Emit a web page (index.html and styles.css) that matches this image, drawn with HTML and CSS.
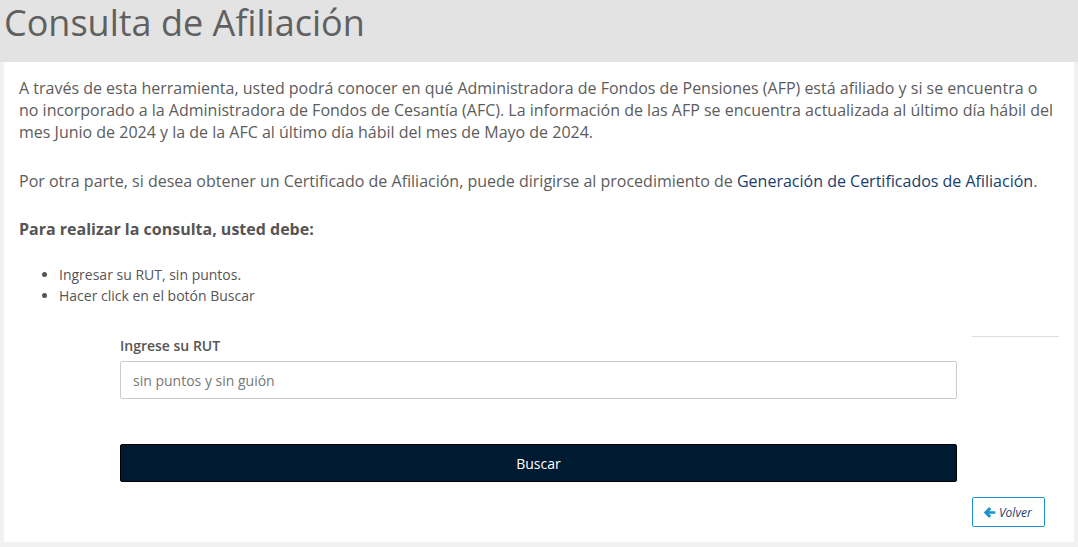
FILE: index.html
```html
<!DOCTYPE html>
<html lang="es">
<head>
<meta charset="utf-8">
<title>Consulta de Afiliación</title>
<link rel="stylesheet" href="styles.css">
</head>
<body>
<header class="page-header">
  <h1 class="page-title">Consulta de Afiliación</h1>
</header>
<main class="panel">
  <p class="intro">A través de esta herramienta, usted podrá conocer en qué Administradora de Fondos de Pensiones (AFP) está afiliado y si se encuentra o no incorporado a la Administradora de Fondos de Cesantía (AFC). La información de las AFP se encuentra actualizada al último día hábil del mes Junio de 2024 y la de la AFC al último día hábil del mes de Mayo de 2024.</p>
  <p class="intro">Por otra parte, si desea obtener un Certificado de Afiliación, puede dirigirse al procedimiento de <a class="link" href="#">Generación de Certificados de Afiliación</a>.</p>
  <h2 class="steps-title">Para realizar la consulta, usted debe:</h2>
  <ul class="steps">
    <li>Ingresar su RUT, sin puntos.</li>
    <li>Hacer click en el botón Buscar</li>
  </ul>
  <div class="form-grid">
    <form class="rut-form">
      <label class="rut-label" for="rut">Ingrese su RUT</label>
      <input class="rut-input" id="rut" type="text" placeholder="sin puntos y sin guión">
      <button class="btn-buscar" type="button">Buscar</button>
    </form>
    <div class="side">
      <hr class="side-rule">
    </div>
    <div class="back-cell">
      <a class="btn-volver" href="#"><svg class="arrow" viewBox="0 0 14 14" width="13" height="13" aria-hidden="true"><path d="M0.8 7 L6.6 1.2 L8.9 3.5 L6.6 5.6 H13.2 V8.4 H6.6 L8.9 10.5 L6.6 12.8 Z" fill="#1b93cf"/></svg><span>Volver</span></a>
    </div>
  </div>
</main>
</body>
</html>
```

FILE: styles.css
```css
* { box-sizing: border-box; }

html, body {
  margin: 0;
  padding: 0;
}

body {
  background: #f1f1f1;
  font-family: "Open Sans", "Noto Sans", sans-serif;
  color: #5c5c5c;
  width: 1078px;
  height: 547px;
  overflow: hidden;
}

.page-header {
  background: #e3e3e3;
  height: 62px;
  padding: 0 0 0 4px;
}

.page-title {
  margin: 0;
  font-weight: 400;
  font-size: 36px;
  line-height: 46px;
  color: #606060;
}

.panel {
  background: #ffffff;
  margin: 0 4px 0 4px;
  height: 480px;
  padding: 15px 15px 0 15px;
}

.intro {
  margin: 0 0 27px 0;
  font-size: 16px;
  line-height: 22px;
  color: #5c5c5c;
}

.link {
  color: #173e6c;
  text-decoration: none;
}

.steps-title {
  margin: -1px 0 0 0;
  font-size: 16px;
  font-weight: 700;
  line-height: 22px;
  color: #555;
}

.steps {
  margin: 24px 0 0 0;
  padding-left: 40px;
  font-size: 14px;
  line-height: 21px;
  color: #555;
}

.form-grid {
  display: grid;
  grid-template-columns: 1fr 87px;
  column-gap: 15px;
  margin-top: 20px;
}

.rut-form {
  grid-row: 1 / span 2;
  padding-left: 101px;
  display: flex;
  flex-direction: column;
}

.rut-label {
  font-size: 14px;
  font-weight: 600;
  line-height: 20px;
  color: #555;
  margin: 10px 0 5px 0;
}

.rut-input {
  height: 38px;
  border: 1px solid #cccccc;
  border-radius: 2px;
  padding: 0 12px;
  font-family: "Open Sans", "Noto Sans", sans-serif;
  font-size: 14px;
  color: #555;
  background: #fff;
}

.rut-input::placeholder {
  color: #777;
}

.btn-buscar {
  margin-top: 45px;
  height: 38px;
  border: 1px solid #000;
  border-radius: 2px;
  background: #001a32;
  color: #fff;
  font-family: "Open Sans", "Noto Sans", sans-serif;
  font-size: 14px;
}

.side {
  grid-column: 2;
  grid-row: 1;
}

.side-rule {
  margin: 10px 0 0 0;
  border: 0;
  border-top: 1px solid #dddddd;
}

.back-cell {
  grid-column: 2;
  grid-row: 3;
  margin-top: 15px;
}

.btn-volver {
  display: inline-flex;
  align-items: center;
  gap: 3px;
  height: 30px;
  width: 73px;
  padding: 0 10px;
  border: 1px solid #1b93cf;
  border-radius: 2px;
  font-size: 12px;
  font-style: italic;
  color: #1f3d6b;
  text-decoration: none;
}

.arrow {
  flex: none;
}
```
